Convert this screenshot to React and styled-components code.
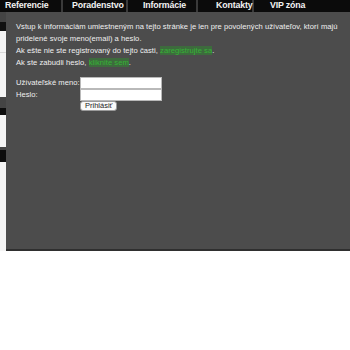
import React from 'react'
import styled, { createGlobalStyle } from 'styled-components'

const GlobalStyle = createGlobalStyle`
  html, body {
    margin: 0;
    padding: 0;
    background: #ffffff;
  }
  body {
    font-family: "Liberation Sans", Arial, Helvetica, sans-serif;
  }
`

const Page = styled.div`
  width: 350px;
  height: 350px;
  overflow: hidden;
  background: #fff;
`

const Nav = styled.div`
  display: flex;
  height: 12px;
  background: #0b0b0b;
  overflow: hidden;
`

const Tab = styled.div`
  width: ${p => p.w}px;
  padding-left: ${p => p.indent}px;
  box-sizing: border-box;
  border-right: ${p => (p.last ? 'none' : '2px solid #3a3a3a')};
  color: #f2f2f2;
  font-weight: bold;
  font-size: 8.8px;
  letter-spacing: -0.15px;
  line-height: 10px;
  white-space: nowrap;
  flex-shrink: 0;
`

const Body = styled.div`
  display: flex;
`

const Sidebar = styled.div`
  width: 6px;
  display: flex;
  flex-direction: column;
  flex-shrink: 0;
`

const Strip = styled.div`
  height: ${p => p.h}px;
  background: ${p => p.c};
  border-bottom: ${p => (p.line ? '1px solid #d8d8d8' : 'none')};
  box-sizing: border-box;
`

const Panel = styled.div`
  flex: 1;
  height: 239px;
  background: #4c4c4c;
  border-bottom: 2px solid #2f2f2f;
  padding: 9px 6px 0 10px;
  box-sizing: border-box;
  color: #f0f0f0;
  font-size: 7.6px;
  letter-spacing: 0.04px;
  line-height: 12px;
`

const Para = styled.p`
  margin: 0;
`

const Link = styled.a`
  color: #36b336;
  text-decoration: none;
  background: #3d6b3d;
`

const LoginForm = styled.form`
  margin-top: 8px;
  display: grid;
  grid-template-columns: 64px 82px;
  align-items: center;
`

const Label = styled.label`
  line-height: 12px;
  white-space: nowrap;
`

const Field = styled.input`
  width: 82px;
  height: 12px;
  box-sizing: border-box;
  border: 1px solid #b9b9b9;
  background: #fff;
  margin: 0;
  padding: 0;
`

const Submit = styled.button`
  grid-column: 2;
  justify-self: start;
  height: 10px;
  padding: 0 4px;
  border: 1px solid #9a9a9a;
  border-radius: 3px;
  background: #fafafa;
  color: #222;
  font-family: "Liberation Sans", Arial, sans-serif;
  font-size: 7.5px;
  line-height: 8px;
`

const tabs = [
  { name: 'Referencie', w: 63, indent: 5 },
  { name: 'Poradenstvo', w: 65, indent: 9 },
  { name: 'Informácie', w: 70, indent: 15 },
  { name: 'Kontakty', w: 56, indent: 18 },
  { name: 'VIP zóna', w: 96, indent: 16, last: true },
]

const strips = [
  { h: 10, c: '#444' },
  { h: 9, c: '#111' },
  { h: 22, c: '#f4f4f4', line: true },
  { h: 44, c: '#f4f4f4' },
  { h: 11, c: '#444' },
  { h: 7, c: '#0d0d0d' },
  { h: 32, c: '#f4f4f4' },
  { h: 3, c: '#444' },
  { h: 12, c: '#0d0d0d' },
  { h: 89, c: '#f4f4f4' },
]

export default function App() {
  return (
    <Page>
      <GlobalStyle />
      <Nav>
        {tabs.map(t => (
          <Tab key={t.name} w={t.w} indent={t.indent} last={t.last}>{t.name}</Tab>
        ))}
      </Nav>
      <Body>
        <Sidebar>
          {strips.map((s, i) => (
            <Strip key={i} h={s.h} c={s.c} line={s.line} />
          ))}
        </Sidebar>
        <Panel>
          <Para>Vstup k informáciám umiestneným na tejto stránke je len pre povolených užívateľov, ktorí majú pridelené svoje meno(email) a heslo.</Para>
          <Para>Ak ešte nie ste registrovaný do tejto časti, <Link href="#">zaregistrujte sa</Link>.</Para>
          <Para>Ak ste zabudli heslo, <Link href="#">kliknite sem</Link>.</Para>
          <LoginForm onSubmit={e => e.preventDefault()}>
            <Label>Užívateľské meno:</Label>
            <Field type="text" />
            <Label>Heslo:</Label>
            <Field type="password" />
            <Submit type="submit">Prihlásiť</Submit>
          </LoginForm>
        </Panel>
      </Body>
    </Page>
  )
}
